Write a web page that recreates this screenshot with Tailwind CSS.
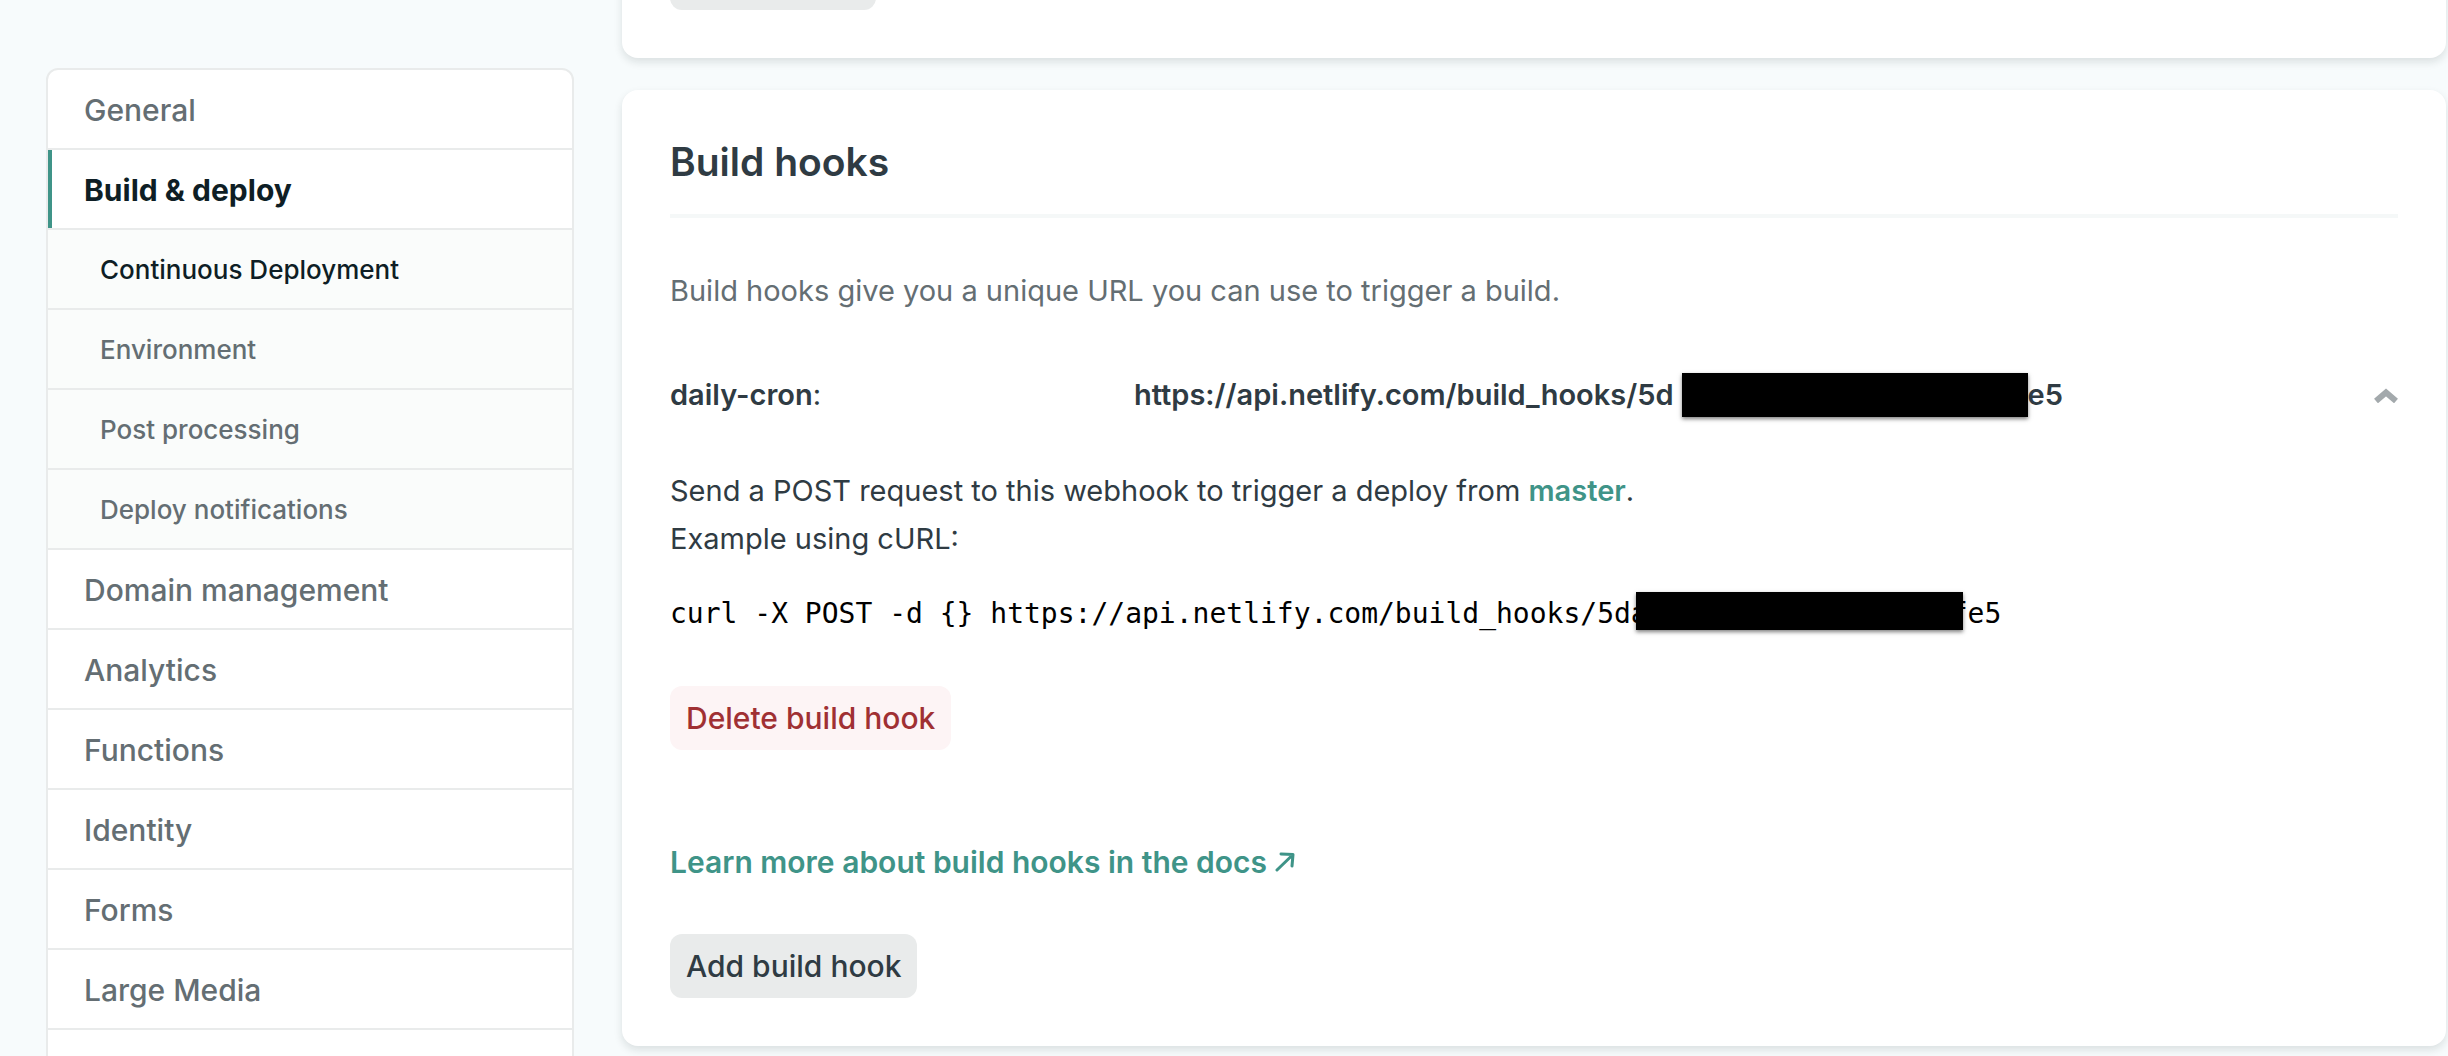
<!DOCTYPE html>
<html lang="en">
<head>
<meta charset="utf-8">
<meta name="viewport" content="width=device-width, initial-scale=1">
<title>Build &amp; deploy settings</title>
<script src="https://cdn.jsdelivr.net/npm/@tailwindcss/browser@4"></script>
</head>
<body class="h-screen overflow-hidden bg-[#f7fbfc] font-['Inter',sans-serif] text-[29px] leading-12 text-[#2f3b43]">
<div class="flex h-full items-start gap-12 overflow-hidden pl-[46px] pr-[2px]">

  <nav aria-label="Settings" class="mt-[68px] w-[528px] shrink-0 rounded-xl border-2 border-[#e9ebeb] bg-white text-[30px] font-medium text-[#646e73]">
    <ul class="divide-y-2 divide-[#e9ebeb]">
      <li><a href="#general" class="flex h-[78px] items-center px-9 pt-0.5">General</a></li>
      <li><a href="#build" aria-current="true" class="flex h-[78px] items-center border-l-4 border-[#3f9488] px-8 pt-0.5 font-bold text-[#0e1e25]">Build &amp; deploy</a></li>
      <li class="bg-[#fafcfb] text-[26px]">
        <ul class="divide-y-2 divide-[#e9ebeb]">
          <li><a href="#continuous" class="flex h-[78px] items-center px-13 pt-0.5 text-[#0e1e25]">Continuous Deployment</a></li>
          <li><a href="#environment" class="flex h-[78px] items-center px-13 pt-0.5">Environment</a></li>
          <li><a href="#post" class="flex h-[78px] items-center px-13 pt-0.5">Post processing</a></li>
          <li><a href="#notifications" class="flex h-[78px] items-center px-13 pt-0.5">Deploy notifications</a></li>
        </ul>
      </li>
      <li><a href="#domain" class="flex h-[78px] items-center px-9 pt-0.5">Domain management</a></li>
      <li><a href="#analytics" class="flex h-[78px] items-center px-9 pt-0.5">Analytics</a></li>
      <li><a href="#functions" class="flex h-[78px] items-center px-9 pt-0.5">Functions</a></li>
      <li><a href="#identity" class="flex h-[78px] items-center px-9 pt-0.5">Identity</a></li>
      <li><a href="#forms" class="flex h-[78px] items-center px-9 pt-0.5">Forms</a></li>
      <li><a href="#media" class="flex h-[78px] items-center px-9 pt-0.5">Large Media</a></li>
      <li class="h-[78px]"></li>
    </ul>
  </nav>

  <main class="-mt-[102px] flex min-w-0 flex-1 flex-col gap-8">
    <section class="rounded-2xl bg-white p-12 shadow-[0_4px_8px_rgba(14,30,37,0.12)]">
      <button type="button" aria-label="Edit settings" class="block h-16 w-[206px] rounded-xl bg-[#e9ebeb]"></button>
    </section>

    <section class="rounded-2xl bg-white p-12 shadow-[0_4px_8px_rgba(14,30,37,0.12)]">
      <h2 class="border-b-4 border-[#f5f8f8] pb-7 text-[39px] leading-12 font-semibold">Build hooks</h2>
      <p class="mt-[49px] text-[#646e73]">Build hooks give you a unique URL you can use to trigger a build.</p>

      <div class="mt-14 flex items-center">
        <div class="w-[464px] shrink-0"><strong class="font-semibold">daily-cron</strong>:</div>
        <div class="flex flex-1 items-center font-semibold">
          <span>https://api.netlify.com/build_hooks/5d</span>
          <span class="ml-2 h-11 w-[346px] bg-black shadow-[0_2px_4px_rgba(0,0,0,0.5)]"></span>
          <span>e5</span>
        </div>
        <button type="button" aria-label="Collapse" class="shrink-0">
          <svg class="h-4 w-6" viewBox="0 0 24 16" fill="none" stroke="#a3a9ac" stroke-width="6"><path d="M2 14 12 5.500 22 14"/></svg>
        </button>
      </div>

      <p class="mt-12">Send a POST request to this webhook to trigger a deploy from <a href="#master" class="font-semibold text-[#3f9488]">master</a>.<br>Example using cURL:</p>

      <code class="mt-[21px] flex items-center font-['DejaVu_Sans_Mono',monospace] text-[28px] text-black">
        <span class="pt-1.5 whitespace-pre">curl -X POST -d {} https://api.netlify.com/build_hooks/5da</span>
        <span class="relative -mx-3 h-[38px] w-[327px] bg-black shadow-[0_2px_4px_rgba(0,0,0,0.5)]"></span>
        <span class="pt-1.5">fe5</span>
      </code>

      <button type="button" class="mt-12 block h-16 rounded-xl bg-[#fdf4f5] px-4 text-[30px] font-medium text-[#a03033]">Delete build hook</button>

      <a href="#docs" class="mt-[88px] flex w-fit items-center gap-2 text-[30px] font-semibold text-[#3f9488]">Learn more about build hooks in the docs
        <svg class="size-5" viewBox="0 0 20 20" fill="none" stroke="currentColor" stroke-width="3" stroke-linecap="round" stroke-linejoin="round"><path d="M2 18 17 3.500M6 2 18 2.500 17 14"/></svg>
      </a>

      <button type="button" class="mt-12 block h-16 rounded-xl bg-[#e9ebeb] px-4 text-[30px] font-medium">Add build hook</button>
    </section>
  </main>
</div>
</body>
</html>
